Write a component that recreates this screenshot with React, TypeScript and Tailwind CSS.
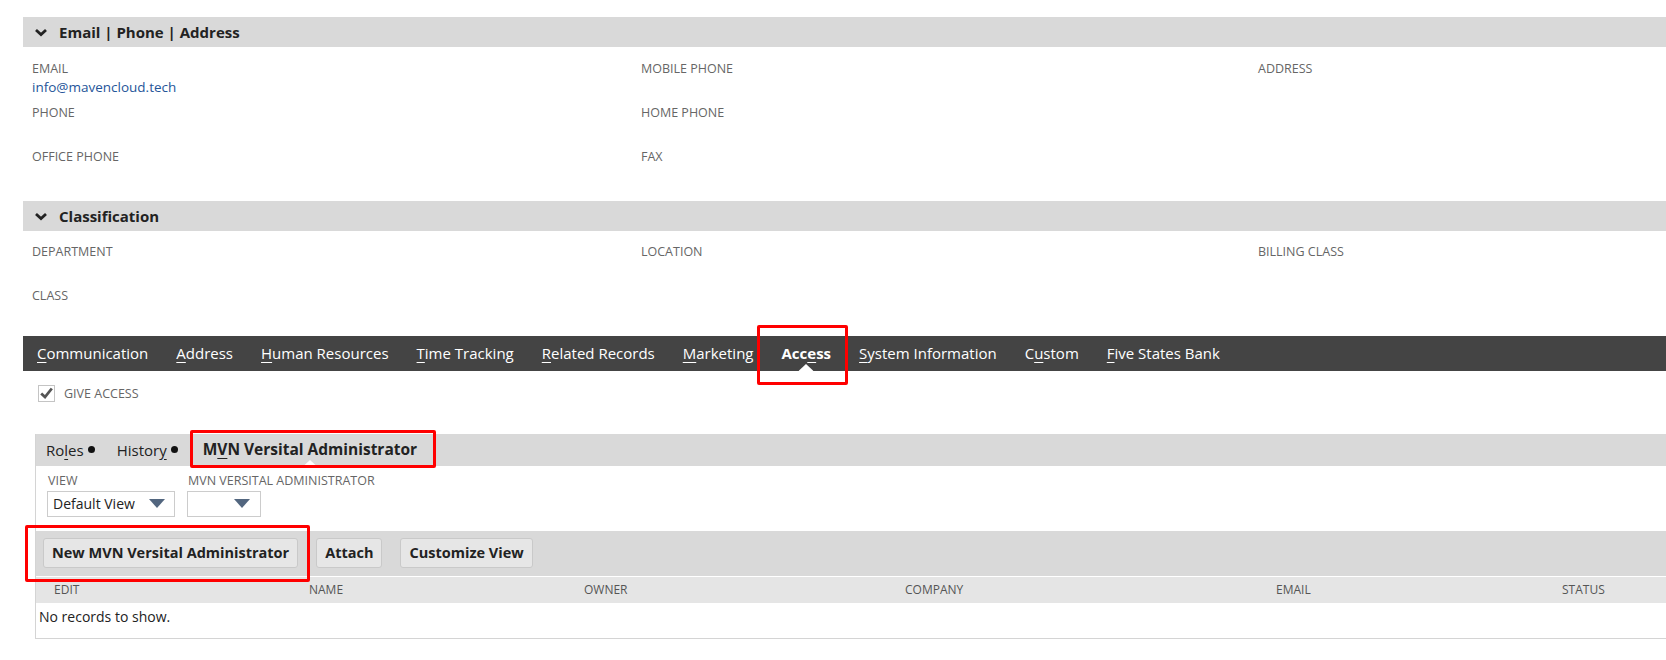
import React from 'react';

const font = { fontFamily: '"Open Sans", "Liberation Sans", sans-serif' };

function Chevron() {
    return (
        <svg width="14" height="9" viewBox="0 0 14 9" className="shrink-0">
            <path d="M2 2 L7 6.5 L12 2" fill="none" stroke="#222" strokeWidth="2.8" />
        </svg>
    );
}

function SectionHeader({ title }: { title: string }) {
    return (
        <div className="h-[30px] bg-[#d9d9d9] flex items-center gap-[11px] pl-[11px]">
            <Chevron />
            <span className="text-[15px] font-bold text-[#222]">{title}</span>
        </div>
    );
}

function Field({ label, value }: { label: string; value?: string }) {
    return (
        <div className="h-[44px] pl-[9px]">
            <div className="text-[12.5px] leading-[18px] text-[#666] uppercase">{label}</div>
            {value && <div className="text-[13.5px] leading-[18px] text-[#255599]">{value}</div>}
        </div>
    );
}

// label with one underlined letter (access key)
function KeyLabel({ text, at }: { text: string; at: number }) {
    return (
        <span>
            {text.slice(0, at)}
            <span className="underline underline-offset-[3px]">{text[at]}</span>
            {text.slice(at + 1)}
        </span>
    );
}

const tabs: { label: string; key: number; active?: boolean }[] = [
    { label: 'Communication', key: 0 },
    { label: 'Address', key: 0 },
    { label: 'Human Resources', key: 0 },
    { label: 'Time Tracking', key: 0 },
    { label: 'Related Records', key: 0 },
    { label: 'Marketing', key: 0 },
    { label: 'Access', key: 3, active: true },
    { label: 'System Information', key: 0 },
    { label: 'Custom', key: 1 },
    { label: 'Five States Bank', key: 0 },
];

function DropArrow() {
    return (
        <svg width="16" height="9" viewBox="0 0 16 9" className="shrink-0">
            <path d="M0 0 H16 L8 9 Z" fill="#52667f" />
        </svg>
    );
}

function Button({ children }: { children: React.ReactNode }) {
    return (
        <button className="h-[30px] px-[8px] rounded-[3px] border border-[#c9c9c9] bg-[#e6e6e6] text-[14.5px] font-bold text-[#222]">
            {children}
        </button>
    );
}

export default function App() {
    return (
        <div className="relative w-[1666px] h-[660px] overflow-hidden bg-white text-[#222]" style={font}>
            <div className="pl-[23px] pt-[17px]">
                {/* Email | Phone | Address */}
                <SectionHeader title="Email | Phone | Address" />
                <div className="grid grid-cols-[609px_617px_1fr] pt-[13px] pb-[9px]">
                    <div>
                        <Field label="Email" value="info@mavencloud.tech" />
                        <Field label="Phone" />
                        <Field label="Office Phone" />
                    </div>
                    <div>
                        <Field label="Mobile Phone" />
                        <Field label="Home Phone" />
                        <Field label="Fax" />
                    </div>
                    <div>
                        <Field label="Address" />
                    </div>
                </div>

                {/* Classification */}
                <SectionHeader title="Classification" />
                <div className="grid grid-cols-[609px_617px_1fr] pt-[12px] pb-[5px]">
                    <div>
                        <Field label="Department" />
                        <Field label="Class" />
                    </div>
                    <div>
                        <Field label="Location" />
                    </div>
                    <div>
                        <Field label="Billing Class" />
                    </div>
                </div>

                {/* Main tabs */}
                <div className="h-[35px] bg-[#444] flex items-stretch">
                    {tabs.map((t) => (
                        <div
                            key={t.label}
                            className={`relative flex items-center px-[14px] text-[15px] text-white ${t.active ? 'font-bold' : ''}`}
                        >
                            <KeyLabel text={t.label} at={t.key} />
                            {t.active && (
                                <svg width="15" height="7" viewBox="0 0 15 7" className="absolute bottom-0 left-1/2 -translate-x-1/2">
                                    <path d="M0 7 L7.5 0 L15 7 Z" fill="#fff" />
                                </svg>
                            )}
                        </div>
                    ))}
                </div>

                {/* Give access */}
                <div className="flex items-center gap-[9px] pl-[15px] pt-[13px]">
                    <div className="w-[17px] h-[17px] border border-[#c4c4c4] bg-white flex items-center justify-center">
                        <svg width="13" height="12" viewBox="0 0 13 12">
                            <path d="M1.2 6.5 L5 10 L11.8 1.5" fill="none" stroke="#555" strokeWidth="2.8" />
                        </svg>
                    </div>
                    <span className="text-[12.5px] text-[#666] uppercase translate-y-[1px]">Give Access</span>
                </div>

                {/* Subtab panel */}
                <div className="ml-[12px] mt-[31px] border-l border-b border-[#d4d4d4]">
                    <div className="h-[32px] bg-[#d9d9d9] flex items-stretch pl-[10px] text-[15px] text-[#222]">
                        <span className="flex items-center gap-[4px]">
                            <KeyLabel text="Roles" at={2} />
                            <span className="w-[7px] h-[7px] rounded-full bg-[#111] inline-block" />
                        </span>
                        <span className="flex items-center gap-[4px] ml-[22px]">
                            <KeyLabel text="History" at={6} />
                            <span className="w-[7px] h-[7px] rounded-full bg-[#111] inline-block" />
                        </span>
                        <span className="relative flex items-center ml-[14px] px-[11px] text-[15.5px] font-bold">
                            <KeyLabel text="MVN Versital Administrator" at={1} />
                            <svg width="13" height="6" viewBox="0 0 13 6" className="absolute bottom-0 left-1/2 -translate-x-1/2">
                                <path d="M0 6 L6.5 0 L13 6 Z" fill="#fff" />
                            </svg>
                        </span>
                    </div>

                    {/* Filters */}
                    <div className="flex gap-[12px] pl-[11px] pt-[7px] pb-[14px]">
                        <div>
                            <div className="text-[12.5px] leading-[15px] text-[#666] uppercase pl-[1px]">View</div>
                            <div className="mt-[3px] w-[128px] h-[26px] border border-[#ccc] flex items-center justify-between pl-[5px] pr-[9px] text-[14px] text-[#222]">
                                <span>Default View</span>
                                <DropArrow />
                            </div>
                        </div>
                        <div>
                            <div className="text-[12.5px] leading-[15px] text-[#666] uppercase pl-[1px]">MVN Versital Administrator</div>
                            <div className="mt-[3px] w-[74px] h-[26px] border border-[#ccc] flex items-center justify-end pr-[10px]">
                                <DropArrow />
                            </div>
                        </div>
                    </div>

                    {/* Toolbar */}
                    <div className="h-[46px] bg-[#d9d9d9] flex items-center gap-[18px] pl-[7px] border-b border-white">
                        <Button>New MVN Versital Administrator</Button>
                        <Button>Attach</Button>
                        <Button>Customize View</Button>
                    </div>

                    {/* List header */}
                    <div className="h-[26px] bg-[#e5e5e5] grid grid-cols-[255px_275px_321px_371px_286px_1fr] items-center pl-[18px] text-[12px] text-[#555] uppercase">
                        <span>Edit</span>
                        <span>Name</span>
                        <span>Owner</span>
                        <span>Company</span>
                        <span>Email</span>
                        <span>Status</span>
                    </div>
                    <div className="h-[35px] pt-[4px] pl-[3px] text-[14px] leading-[20px] text-[#222]">No records to show.</div>
                </div>
            </div>

            {/* Annotation boxes */}
            <div className="absolute left-[757px] top-[325px] w-[91px] h-[60px] border-[3px] border-[#ff0000] rounded-[2px]" />
            <div className="absolute left-[190px] top-[430px] w-[246px] h-[38px] border-[3px] border-[#ff0000] rounded-[2px]" />
            <div className="absolute left-[25px] top-[525px] w-[285px] h-[57px] border-[3px] border-[#ff0000] rounded-[2px]" />
        </div>
    );
}
